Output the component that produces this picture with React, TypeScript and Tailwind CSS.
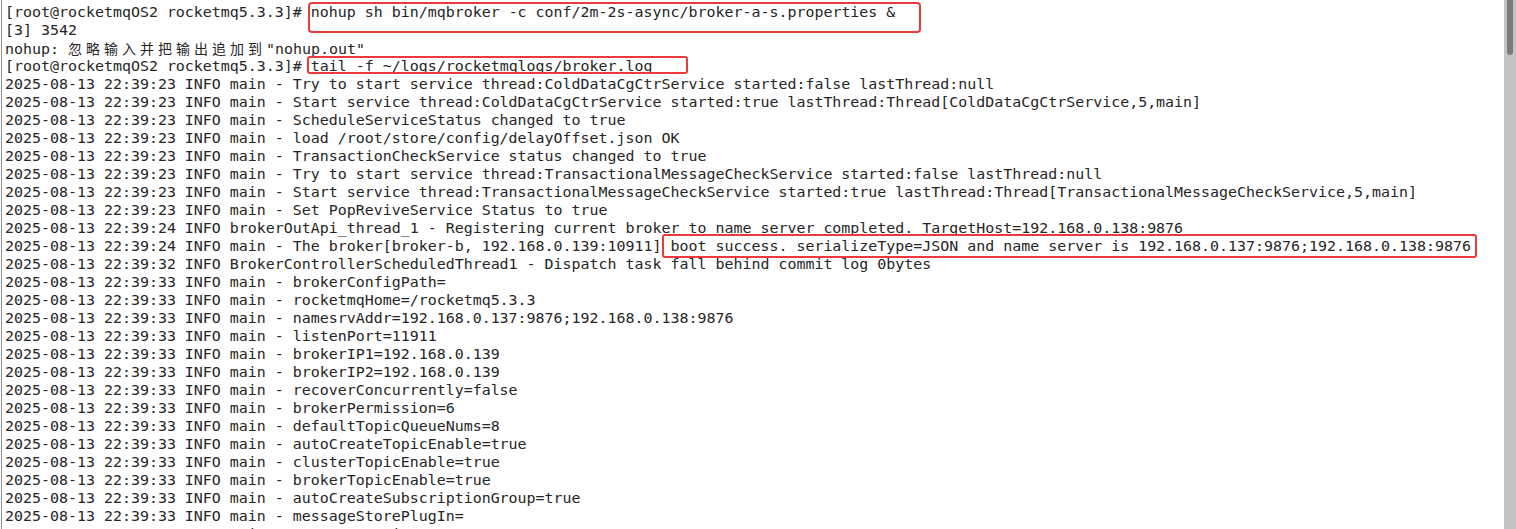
const prompt = "[root@rocketmqOS2 rocketmq5.3.3]# ";
const ts23 = "2025-08-13 22:39:23 INFO main - ";
const ts33 = "2025-08-13 22:39:33 INFO main - ";

const logLines = [
  ts23 + "Try to start service thread:ColdDataCgCtrService started:false lastThread:null",
  ts23 + "Start service thread:ColdDataCgCtrService started:true lastThread:Thread[ColdDataCgCtrService,5,main]",
  ts23 + "ScheduleServiceStatus changed to true",
  ts23 + "load /root/store/config/delayOffset.json OK",
  ts23 + "TransactionCheckService status changed to true",
  ts23 + "Try to start service thread:TransactionalMessageCheckService started:false lastThread:null",
  ts23 + "Start service thread:TransactionalMessageCheckService started:true lastThread:Thread[TransactionalMessageCheckService,5,main]",
  ts23 + "Set PopReviveService Status to true",
  "2025-08-13 22:39:24 INFO brokerOutApi_thread_1 - Registering current broker to name server completed. TargetHost=192.168.0.138:9876",
  "2025-08-13 22:39:24 INFO main - The broker[broker-b, 192.168.0.139:10911] boot success. serializeType=JSON and name server is 192.168.0.137:9876;192.168.0.138:9876",
  "2025-08-13 22:39:32 INFO BrokerControllerScheduledThread1 - Dispatch task fall behind commit log 0bytes",
  ts33 + "brokerConfigPath=",
  ts33 + "rocketmqHome=/rocketmq5.3.3",
  ts33 + "namesrvAddr=192.168.0.137:9876;192.168.0.138:9876",
  ts33 + "listenPort=11911",
  ts33 + "brokerIP1=192.168.0.139",
  ts33 + "brokerIP2=192.168.0.139",
  ts33 + "recoverConcurrently=false",
  ts33 + "brokerPermission=6",
  ts33 + "defaultTopicQueueNums=8",
  ts33 + "autoCreateTopicEnable=true",
  ts33 + "clusterTopicEnable=true",
  ts33 + "brokerTopicEnable=true",
  ts33 + "autoCreateSubscriptionGroup=true",
  ts33 + "messageStorePlugIn=",
  ts33 + "msgTraceTopicName=RMQ_SYS_TRACE_TOPIC",
];

function Line({ children }: { children: React.ReactNode }) {
  return <div className="h-[18px] leading-[18px] whitespace-pre">{children}</div>;
}

export default function App() {
  return (
    <div className="relative flex h-[529px] w-[1516px] overflow-hidden bg-white">
      {/* terminal text */}
      <div className="ml-px flex-1 border-l border-[#8f8f8f] pl-[3px] pt-[3px] font-['DejaVu_Sans_Mono','Liberation_Mono',monospace] text-[14.95px] text-[#262626]">
        <Line>{prompt}nohup sh bin/mqbroker -c conf/2m-2s-async/broker-a-s.properties &amp;</Line>
        <Line>[3] 3542</Line>
        <Line>
          nohup:{" "}
          <span className="font-['Noto_Sans_CJK_SC',sans-serif] text-[14px] tracking-[4px]">忽略输入并把输出追加到</span>
          "nohup.out"
        </Line>
        <Line>{prompt}tail -f ~/logs/rocketmqlogs/broker.log</Line>
        {logLines.map((l, i) => (
          <Line key={i}>{l}</Line>
        ))}
      </div>

      {/* scrollbar */}
      <div className="w-[12px] bg-[#c4c4c4]">
        <div className="ml-[3px] h-[55px] w-[6px] rounded-b-[3px] bg-[#7b7b7b]" />
      </div>

      {/* highlight boxes */}
      <div className="absolute left-[308px] top-[2px] h-[31px] w-[613px] rounded-[4px] border-2 border-[#ec3a3c]" />
      <div className="absolute left-[307px] top-[56px] h-[18px] w-[381px] rounded-[3px] border-2 border-[#ec3a3c]" />
      <div className="absolute left-[662px] top-[234px] h-[24px] w-[815px] rounded-[3px] border-2 border-[#ec3a3c]" />
    </div>
  );
}
